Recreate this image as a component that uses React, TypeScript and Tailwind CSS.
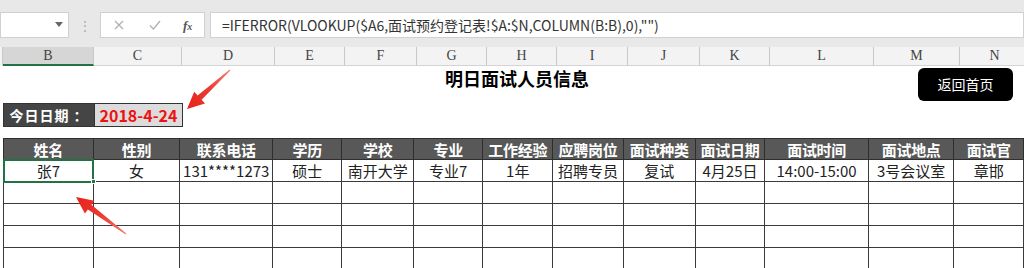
import React from 'react';

type Pt = [number, number];

const arrowPoints = (tail: Pt, tip: Pt, headLen: number, headHalf: number, shaftHalf: number, tailHalf: number) => {
    const dx = tip[0] - tail[0];
    const dy = tip[1] - tail[1];
    const len = Math.hypot(dx, dy);
    const ux = dx / len;
    const uy = dy / len;
    const nx = -uy;
    const ny = ux;
    const bx = tip[0] - ux * headLen;
    const by = tip[1] - uy * headLen;
    const pts: Pt[] = [
        [tail[0] + nx * tailHalf, tail[1] + ny * tailHalf],
        [bx + nx * shaftHalf, by + ny * shaftHalf],
        [bx + nx * headHalf, by + ny * headHalf],
        tip,
        [bx - nx * headHalf, by - ny * headHalf],
        [bx - nx * shaftHalf, by - ny * shaftHalf],
        [tail[0] - nx * tailHalf, tail[1] - ny * tailHalf],
    ];
    return pts.map((p) => `${p[0].toFixed(1)},${p[1].toFixed(1)}`).join(' ');
};

const letters = ['B', 'C', 'D', 'E', 'F', 'G', 'H', 'I', 'J', 'K', 'L', 'M', 'N'];
const widths = [91, 88, 93, 70, 72, 70, 70, 71, 72, 70, 104, 86, 70];
const headers = ['姓名', '性别', '联系电话', '学历', '学校', '专业', '工作经验', '应聘岗位', '面试种类', '面试日期', '面试时间', '面试地点', '面试官'];
const firstRow = ['张7', '女', '131****1273', '硕士', '南开大学', '专业7', '1年', '招聘专员', '复试', '4月25日', '14:00-15:00', '3号会议室', '章邯'];

const App: React.FC = () => {
    return (
        <div className="relative w-[1024px] h-[268px] overflow-hidden bg-white font-['Noto_Sans_CJK_SC',sans-serif]">
            {/* Formula bar */}
            <div className="flex h-[47px] items-start bg-[#e8e8e8] pt-[12px]">
                <div className="relative h-[26px] w-[69px] border border-[#d0d0d0] bg-white">
                    <span className="absolute right-[5px] top-[9px] h-0 w-0 border-x-[4px] border-t-[5px] border-x-transparent border-t-[#666]"></span>
                </div>
                <div className="flex h-[26px] w-[31px] items-center justify-center text-[14px] leading-none text-[#b0b0b0]">⋮</div>
                <div className="flex h-[26px] w-[105px] items-center border border-[#d0d0d0] bg-white">
                    <svg className="ml-[13px]" width="10" height="10" viewBox="0 0 10 10">
                        <path d="M1 1L9 9M9 1L1 9" stroke="#b0b0b0" strokeWidth="1.3" fill="none" />
                    </svg>
                    <svg className="ml-[25px]" width="12" height="10" viewBox="0 0 12 10">
                        <path d="M1 5.5L4.5 9L11 1" stroke="#b0b0b0" strokeWidth="1.3" fill="none" />
                    </svg>
                    <span className="ml-[22px] font-['Liberation_Serif',serif] text-[13px] italic font-bold leading-none text-[#555]">f<span className="text-[10px]">x</span></span>
                </div>
                <div className="ml-[5px] flex h-[26px] flex-1 items-center border border-[#d0d0d0] bg-white pl-[11px] text-[14px] leading-none text-[#333]">
                    =IFERROR(VLOOKUP($A6,面试预约登记表!$A:$N,COLUMN(B:B),0),"")
                </div>
            </div>

            {/* Column letters */}
            <div className="flex h-[19px] bg-[#f3f3f3] font-['Liberation_Serif',serif] text-[14px] text-[#444]">
                <div className="w-[3px] shrink-0 border-r border-[#c8c8c8]"></div>
                {letters.map((l, i) => (
                    <div
                        key={l}
                        style={{ width: widths[i] }}
                        className={`flex shrink-0 items-center justify-center border-r border-[#c8c8c8] leading-none ${
                            i === 0 ? 'border-b-2 border-b-[#217346] bg-[#d6d6d6]' : 'border-b border-b-[#d4d4d4]'
                        }`}
                    >
                        {l}
                    </div>
                ))}
            </div>

            {/* Title area */}
            <div className="relative h-[37px]">
                <div className="flex justify-center pl-[10px] text-[18px] font-bold leading-[24px] text-black">
                    明日面试人员信息
                </div>
                <div className="absolute right-[11px] top-[2px] flex h-[33px] w-[95px] items-center justify-center rounded-[6px] bg-black text-[14px] text-white">
                    返回首页
                </div>
            </div>

            {/* Date row */}
            <div className="flex pl-[3px]">
                <div className="flex h-[24px] w-[92px] items-center justify-center border border-[#333] bg-[#454545] text-[14px] font-bold leading-none tracking-[1px] text-white">
                    今日日期 ：
                </div>
                <div className="flex h-[24px] w-[88px] items-center justify-center border border-l-0 border-[#333] bg-[#dcdcdc] text-[16px] font-bold leading-none text-[#ee1111]">
                    2018-4-24
                </div>
            </div>

            {/* Table */}
            <div className="mt-[11px] pl-[3px]">
                <table className="table-fixed border-collapse text-[15px] leading-none">
                    <colgroup>
                        {widths.map((w, i) => (
                            <col key={i} style={{ width: w }} />
                        ))}
                    </colgroup>
                    <thead>
                        <tr className="h-[21px] bg-[#585858] text-white">
                            {headers.map((h) => (
                                <th key={h} className="whitespace-nowrap border border-[#2e2e2e] p-0 text-center font-bold tracking-[-0.3px]">
                                    {h}
                                </th>
                            ))}
                        </tr>
                    </thead>
                    <tbody className="text-[#222]">
                        <tr className="h-[22px]">
                            {firstRow.map((c, i) => (
                                <td
                                    key={i}
                                    className={`relative whitespace-nowrap border border-[#3a3a3a] p-0 text-center ${
                                        i === 0 ? 'outline-2 -outline-offset-1 outline-[#217346]' : ''
                                    }`}
                                >
                                    {c}
                                    {i === 0 && (
                                        <span className="absolute -bottom-[3px] -right-[3px] h-[5px] w-[5px] border border-white bg-[#217346]"></span>
                                    )}
                                </td>
                            ))}
                        </tr>
                        {[0, 1, 2, 3].map((r) => (
                            <tr key={r} className="h-[22px]">
                                {widths.map((_, i) => (
                                    <td key={i} className="border border-[#3a3a3a] p-0"></td>
                                ))}
                            </tr>
                        ))}
                    </tbody>
                </table>
            </div>

            {/* Red annotation arrows */}
            <svg className="pointer-events-none absolute inset-0" width="1024" height="268">
                <defs>
                    <linearGradient id="arrowA" x1="230" y1="70" x2="187" y2="109" gradientUnits="userSpaceOnUse">
                        <stop offset="0" stopColor="#f47a72" />
                        <stop offset="0.5" stopColor="#ea3a30" />
                        <stop offset="1" stopColor="#e8221c" />
                    </linearGradient>
                    <linearGradient id="arrowB" x1="126" y1="234" x2="76" y2="197" gradientUnits="userSpaceOnUse">
                        <stop offset="0" stopColor="#f47a72" />
                        <stop offset="0.5" stopColor="#ea3a30" />
                        <stop offset="1" stopColor="#e8221c" />
                    </linearGradient>
                </defs>
                <polygon points={arrowPoints([230, 70], [187, 109], 17, 8, 3, 0.5)} fill="url(#arrowA)" />
                <polygon points={arrowPoints([126, 234], [76, 197], 17, 8, 3, 0.5)} fill="url(#arrowB)" />
            </svg>
        </div>
    );
};

export default App;
